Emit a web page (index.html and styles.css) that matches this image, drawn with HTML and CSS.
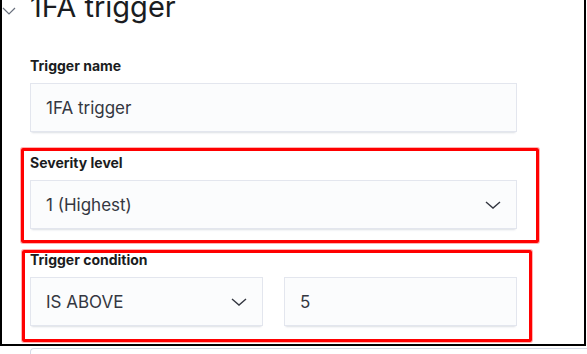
FILE: index.html
```html
<!DOCTYPE html>
<html lang="en">
<head>
  <meta charset="UTF-8" />
  <meta name="viewport" content="width=device-width, initial-scale=1" />
  <title>1FA trigger</title>
  <link rel="stylesheet" href="styles.css">
</head>
<body>
  <div class="panel">
    <div class="panel-head">
      <svg class="toggle" width="14" height="8" viewBox="0 0 14 8"><path d="M1 1 L7 7 L13 1" fill="none" stroke="#69707d" stroke-width="1.2"/></svg>
      <h1>1FA trigger</h1>
    </div>

    <div class="field">
      <label>Trigger name</label>
      <div class="control">1FA trigger</div>
    </div>

    <div class="field mark mark-severity">
      <label>Severity level</label>
      <div class="control select">
        <span>1 (Highest)</span>
        <svg width="16" height="8" viewBox="0 0 16 8"><path d="M1 1 L8 7 L15 1" fill="none" stroke="#343741" stroke-width="1.4"/></svg>
      </div>
    </div>

    <div class="field mark mark-condition">
      <label>Trigger condition</label>
      <div class="pair">
        <div class="control select">
          <span>IS ABOVE</span>
          <svg width="16" height="8" viewBox="0 0 16 8"><path d="M1 1 L8 7 L15 1" fill="none" stroke="#343741" stroke-width="1.4"/></svg>
        </div>
        <div class="control">5</div>
      </div>
    </div>
  </div>
  <div class="next-field"></div>
</body>
</html>
```

FILE: styles.css
```css
body {
  margin: 0;
  font-family: 'Inter', 'Noto Sans', sans-serif;
  background: #ffffff;
  overflow: hidden;
}
.panel {
  width: 586px;
  height: 346px;
  box-sizing: border-box;
  border: 2px solid #000000;
  border-top: none;
  overflow: hidden;
}
.panel-head {
  display: flex;
  align-items: flex-start;
  margin-top: -9px;
  height: 67px;
}
.toggle {
  margin-top: 16px;
  margin-right: 14px;
  flex: none;
}
h1 {
  margin: 0;
  font-size: 29px;
  font-weight: 400;
  line-height: 32px;
  color: #1a1c21;
}
.field {
  position: relative;
  width: 487px;
  margin-left: 28px;
  margin-bottom: 23px;
}
.field label {
  display: block;
  font-size: 14px;
  line-height: 16px;
  font-weight: 700;
  color: #1a1c21;
  margin-bottom: 9px;
}
.control {
  height: 49px;
  box-sizing: border-box;
  padding: 0 15px;
  display: flex;
  align-items: center;
  justify-content: space-between;
  background: #fbfcfd;
  border: 1px solid #e3e6ee;
  box-shadow: 0 1px 1px -1px rgba(152, 162, 179, 0.3), 0 3px 2px -2px rgba(152, 162, 179, 0.3);
  font-size: 17px;
  color: #343741;
}
.pair {
  display: grid;
  grid-template-columns: 1fr 1fr;
  gap: 21px;
}
.mark::after {
  content: "";
  position: absolute;
  border: 3px solid #ff0000;
  border-radius: 2px;
  box-shadow: 0 0 0 1px rgba(255, 0, 0, 0.3);
  pointer-events: none;
}
.mark-severity::after {
  top: -7px;
  left: -9px;
  right: -22px;
  bottom: -14px;
}
.mark-condition::after {
  top: -2px;
  left: -8px;
  right: -15px;
  bottom: -16px;
}
.next-field {
  margin: 2px 0 0 30px;
  height: 10px;
  border-top: 1px solid #d3dae6;
  border-left: 1px solid #d3dae6;
  border-top-left-radius: 4px;
}
```
